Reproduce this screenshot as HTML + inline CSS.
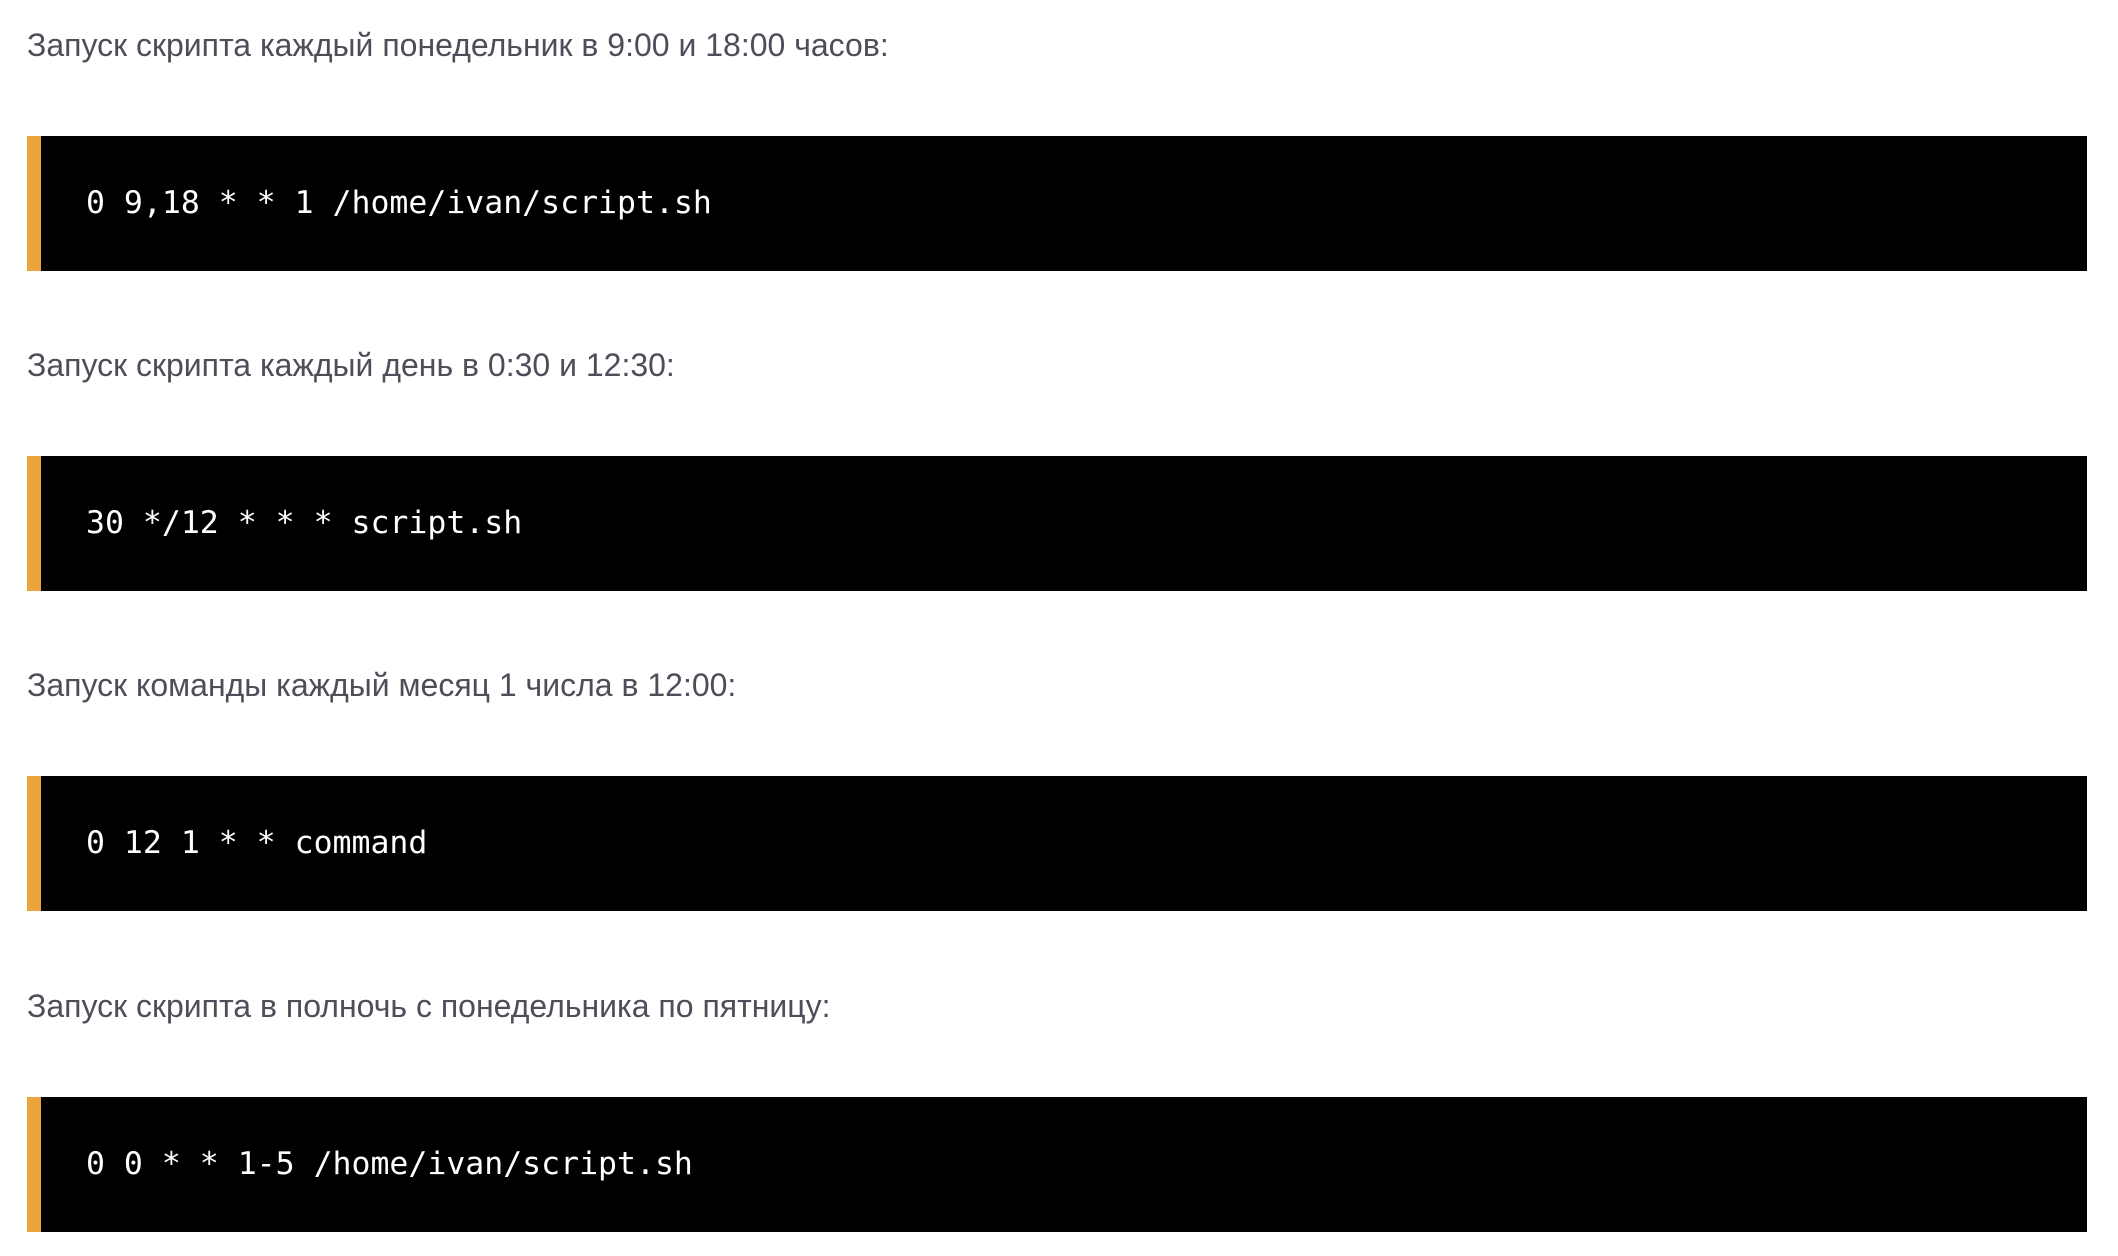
<!DOCTYPE html>
<html><head><meta charset="utf-8"><style>
html,body{margin:0;padding:0;background:#fff;width:2118px;height:1256px;overflow:hidden}
.p{position:absolute;left:27px;font-family:"Liberation Sans","DejaVu Sans",sans-serif;font-size:32px;color:#4f4d59;line-height:32px;white-space:nowrap}
.c{position:absolute;left:27px;width:2060px;height:135px;background:#000;border-left:14px solid #eba43b;box-sizing:border-box}
.c span{position:absolute;left:45px;top:47px;font-family:"DejaVu Sans Mono","Liberation Mono",monospace;font-size:31.5px;line-height:40px;color:#fff;white-space:pre}
</style></head><body>
<div class="p" style="top:29px">Запуск скрипта каждый понедельник в 9:00 и 18:00 часов:</div>
<div class="c" style="top:136px"><span>0 9,18 * * 1 /home/ivan/script.sh</span></div>
<div class="p" style="top:349px">Запуск скрипта каждый день в 0:30 и 12:30:</div>
<div class="c" style="top:456px"><span>30 */12 * * * script.sh</span></div>
<div class="p" style="top:669px">Запуск команды каждый месяц 1 числа в 12:00:</div>
<div class="c" style="top:776px"><span>0 12 1 * * command</span></div>
<div class="p" style="top:990px">Запуск скрипта в полночь с понедельника по пятницу:</div>
<div class="c" style="top:1097px"><span>0 0 * * 1-5 /home/ivan/script.sh</span></div>
</body></html>
